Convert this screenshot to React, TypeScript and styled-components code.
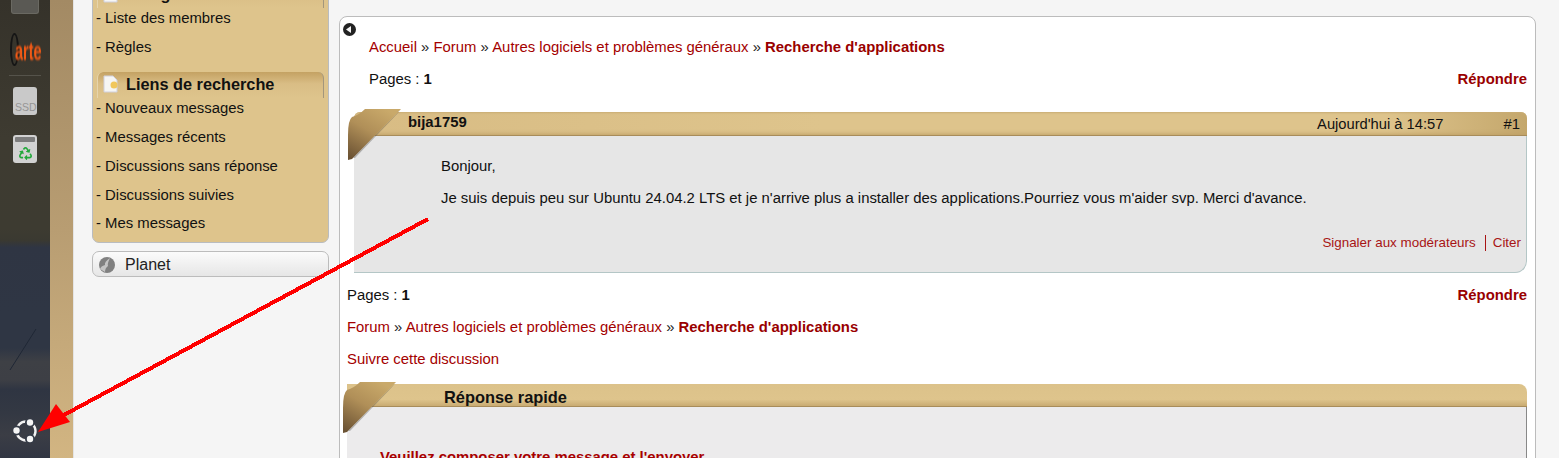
import React from "react";
import styled, { createGlobalStyle } from "styled-components";
import { FaRecycle } from "react-icons/fa";

const Global = createGlobalStyle`
  html, body { margin: 0; padding: 0; background: #f5f5f5; }
  body { font-family: "Liberation Sans", Arial, sans-serif; font-size: 14.88px; color: #111; }
`;

const Page = styled.div`
  position: relative;
  display: flex;
  width: 1559px;
  height: 458px;
  overflow: hidden;
`;

const Dock = styled.aside`
  width: 50px;
  flex: none;
  display: flex;
  flex-direction: column;
  align-items: center;
  background: linear-gradient(
    180deg,
    #35322a 0,
    #3e3b31 30%,
    #3d3b31 50%,
    #3a3931 52.5%,
    #2f3543 54%,
    #2f3644 68%,
    #2f3644 76%,
    #3e4045 79%,
    #3d3f45 83%,
    #2f3542 85%,
    #333843 90%,
    #3b3d45 95%,
    #313643 100%
  );
`;

const TopTile = styled.div`
  width: 28px;
  height: 14px;
  flex: none;
  box-sizing: border-box;
  border-radius: 0 0 3px 3px;
  background: #5a5954;
  border: 1px solid #6a6962;
  border-top: 0;
`;

const ArteLogo = styled.div`
  position: relative;
  width: 33px;
  height: 34px;
  margin: 19px 0 0 2px;
  flex: none;
  display: flex;
  align-items: center;
  justify-content: flex-end;
`;

const ArteRing = styled.span`
  position: absolute;
  left: 0;
  top: 0;
  width: 5px;
  height: 29px;
  border: 2px solid #151515;
  border-radius: 50%;
`;

const ArteWord = styled.span`
  font-size: 26px;
  font-weight: 700;
  color: #f25a16;
  transform: scaleX(0.56);
  transform-origin: right center;
  filter: blur(0.8px);
  line-height: 34px;
  margin-top: 2px;
  margin-right: 1px;
`;

const DockRule = styled.div`
  width: 32px;
  height: 1px;
  margin-top: 8px;
  flex: none;
  background: #55534b;
`;

const SsdTile = styled.div`
  width: 24px;
  height: 28px;
  margin-top: 11px;
  flex: none;
  border-radius: 3px;
  background: #c9c9c9;
  color: #959595;
  font-size: 10.5px;
  line-height: 13px;
  display: flex;
  align-items: flex-end;
  justify-content: flex-start;
  padding: 0 0 1px 2px;
  box-sizing: border-box;
  white-space: nowrap;
`;

const TrashTile = styled.div`
  width: 24px;
  height: 28px;
  margin-top: 20px;
  flex: none;
  border-radius: 3px;
  background: #d2d2d2;
  display: flex;
  flex-direction: column;
  align-items: center;
`;

const TrashLid = styled.div`
  width: 20px;
  height: 5px;
  margin-top: 2px;
  margin-bottom: 5px;
  background: #7d7d7d;
  border-radius: 1px;
`;

const UbuntuMark = styled.svg`
  margin-top: auto;
  margin-bottom: 15px;
  flex: none;
`;

const Strip = styled.div`
  width: 24px;
  flex: none;
  background: linear-gradient(180deg, #a38a64 0%, #b89d72 50%, #d2b582 100%);
  border-right: 1px solid #e4e4e4;
  box-sizing: border-box;
`;

const Main = styled.main`
  flex: 1;
  display: flex;
  align-items: flex-start;
  padding-left: 18px;
  background: #f5f5f5;
  min-width: 0;
`;

const Sidebar = styled.nav`
  width: 237px;
  flex: none;
  margin-top: -25px;
  display: flex;
  flex-direction: column;
  gap: 8px;
`;

const MenuBox = styled.section`
  background: #dec48c;
  border: 1px solid #b9bcc0;
  border-radius: 7px;
  padding: 6px 4px 9px 3px;
  box-sizing: border-box;
`;

const MenuHead = styled.h3<{ $spaced?: boolean }>`
  margin: ${(p) => (p.$spaced ? "15px" : "0")} 0 0 1px;
  height: 26px;
  box-sizing: border-box;
  display: flex;
  align-items: center;
  gap: 7px;
  padding: 0 0 2px 4px;
  font-size: 16.3px;
  font-weight: 700;
  line-height: 24px;
  color: #111;
  border-radius: 6px 6px 0 0;
  border-right: 1px solid #a3967c;
  border-left: 1px solid #e6d4ac;
  background: linear-gradient(180deg, #c4a263 0, #d9bd85 45%, #dec48c 100%);
`;

const MenuList = styled.ul`
  list-style: none;
  margin: 0;
  padding: 0;
  display: flex;
  flex-direction: column;
  gap: 8.9px;
`;

const MenuItem = styled.li`
  height: 20px;
  line-height: 20px;
  font-size: 14.88px;
  color: #111;
  white-space: nowrap;
`;

const PlanetBox = styled.div`
  height: 22px;
  display: flex;
  align-items: center;
  gap: 10px;
  padding: 2px 0 0 6px;
  border: 1px solid #bcbcbc;
  border-radius: 7px;
  background: linear-gradient(180deg, #fbfbfb, #e6e6e6);
  font-size: 16px;
  color: #222;
`;

const ContentBox = styled.article`
  width: 1197px;
  flex: none;
  margin: 16px 0 0 10px;
  background: #fff;
  border: 1px solid #bcbcbc;
  border-radius: 8px;
  box-sizing: border-box;
  padding: 6px 8px 0 3px;
  height: 600px;
`;

const BackIcon = styled.svg`
  display: block;
`;

const Crumbs = styled.div<{ $indent: number; $top: number }>`
  margin: ${(p) => p.$top}px 0 0 ${(p) => p.$indent}px;
  height: 20px;
  line-height: 20px;
  font-size: 14.88px;
  color: #222;
  white-space: nowrap;
`;

const Link = styled.a`
  color: #a40000;
`;

const Current = styled.strong`
  color: #990000;
`;

const PagerRow = styled.div<{ $indent: number; $top: number }>`
  margin: ${(p) => p.$top}px 0 0 ${(p) => p.$indent}px;
  height: 20px;
  line-height: 20px;
  display: flex;
  justify-content: space-between;
  font-size: 14.88px;
  color: #111;
`;

const Post = styled.section`
  position: relative;
  margin: 23px 0 0 11px;
`;

const PostHead = styled.header`
  height: 24px;
  box-sizing: border-box;
  display: flex;
  align-items: flex-start;
  border-radius: 6px 6px 0 0;
  border-bottom: 1px solid #a88c5a;
  background: linear-gradient(90deg, #d8bc84 0, #dec48c 40%, #dec48c 88%, #c4a76c 100%);
  box-shadow: inset 0 -4px 4px -3px #bfa067, inset 0 2px 2px -1px #c9ad74;
  padding-left: 54px;
`;

const Author = styled.strong`
  font-size: 14.88px;
  line-height: 20px;
`;

const PostDate = styled.span`
  margin-left: auto;
  font-size: 14.72px;
  line-height: 25px;
`;

const PostNum = styled.span`
  margin-left: 60px;
  margin-right: 7px;
  font-size: 14.88px;
  line-height: 25px;
`;

const PostBody = styled.div`
  height: 137px;
  box-sizing: border-box;
  background: #e6e6e6;
  border-right: 1px solid #b4c6c6;
  border-bottom: 1px solid #b4c6c6;
  border-radius: 0 0 12px 0;
  padding: 20px 5px 0 87px;
  display: flex;
  flex-direction: column;
`;

const Para = styled.p`
  margin: 0 0 12px;
  font-size: 14.88px;
  line-height: 20px;
  color: #111;
`;

const PostActions = styled.div`
  margin-top: auto;
  margin-bottom: 21px;
  display: flex;
  justify-content: flex-end;
  align-items: center;
  font-size: 13.4px;
  line-height: 16px;
`;

const ActionLink = styled.a<{ $divided?: boolean }>`
  color: #a81414;
  ${(p) => p.$divided && "border-left: 1px solid #a81414; margin-left: 9px; padding-left: 7px;"}
`;

const Corner = styled.svg<{ $left: number; $top: number }>`
  position: absolute;
  left: ${(p) => p.$left}px;
  top: ${(p) => p.$top}px;
`;

const Reply = styled.section`
  position: relative;
  margin: 15px 0 0 4px;
`;

const ReplyHead = styled.header`
  height: 23px;
  box-sizing: border-box;
  border-radius: 0 8px 0 0;
  border-bottom: 1px solid #a88c5a;
  background: linear-gradient(180deg, #dcc28a 0, #dec48c 70%, #c9ab72 100%);
  padding-left: 97px;
  font-size: 16.4px;
  font-weight: 700;
  line-height: 26px;
  color: #111;
  white-space: nowrap;
`;

const ReplyBody = styled.div`
  background: #ecebec;
  border-right: 1px solid #888;
  height: 100px;
  padding: 40px 0 0 33px;
  box-sizing: border-box;
`;

const ReplyPrompt = styled.strong`
  color: #a80000;
  font-size: 14.88px;
  line-height: 20px;
`;

const Arrow = styled.svg`
  position: absolute;
  left: 0;
  top: 0;
  pointer-events: none;
`;

const CornerShape = ({ id, left, top }: { id: string; left: number; top: number }) => (
  <Corner $left={left} $top={top} width="58" height="58" viewBox="0 0 58 58">
    <defs>
      <linearGradient id={id} x1="0.7" y1="0" x2="0.1" y2="1">
        <stop offset="0" stopColor="#c9a96a" />
        <stop offset="0.45" stopColor="#b08f58" />
        <stop offset="1" stopColor="#6b5233" />
      </linearGradient>
    </defs>
    <path d="M6 50 L54 1 L50 6 L8 50 Z" fill="#444" opacity="0.35" />
    <path d="M18 1 L54 1 L5 51 L1 52 L1 27 Q1 12 5 9 Q12 7 18 1 Z" fill={`url(#${id})`} />
  </Corner>
);

const SearchIcon = () => (
  <svg width="17" height="18" viewBox="0 0 17 18">
    <path d="M2 1 H11 L15 5 V17 H2 Z" fill="#f6f6f4" stroke="#d0d0dc" />
    <circle cx="12" cy="10" r="3.5" fill="#f1c75b" />
  </svg>
);

const PlanetIcon = () => (
  <svg width="16" height="16" viewBox="0 0 16 16">
    <circle cx="8" cy="8" r="8" fill="#808080" />
    <path d="M1 12 Q2 9 6 8 Q5 5 11 1 Q8 7 9 9 Q6 11 6 15 Z" fill="#c4c4c4" />
  </svg>
);

export default function App() {
  return (
    <Page>
      <Global />
      <Dock>
        <TopTile />
        <ArteLogo>
          <ArteRing />
          <ArteWord>arte</ArteWord>
        </ArteLogo>
        <DockRule />
        <SsdTile>SSD</SsdTile>
        <TrashTile>
          <TrashLid />
          <FaRecycle size={13} color="#22a83a" />
        </TrashTile>
        <UbuntuMark width="24" height="24" viewBox="0 0 24 24">
          <circle cx="13" cy="12" r="9.5" fill="none" stroke="#f2f2f2" strokeWidth="2.4" />
          <circle cx="17" cy="3.5" r="5" fill="#353b47" />
          <circle cx="3.5" cy="11.5" r="5" fill="#353b47" />
          <circle cx="17" cy="20" r="5" fill="#353b47" />
          <circle cx="17" cy="3.5" r="3.2" fill="#f5f5f5" />
          <circle cx="3.5" cy="11.5" r="3.2" fill="#f5f5f5" />
          <circle cx="17" cy="20" r="3.2" fill="#f5f5f5" />
        </UbuntuMark>
      </Dock>
      <Strip />
      <Main>
        <Sidebar>
          <MenuBox>
            <MenuHead>
              <SearchIcon />
              Navigation
            </MenuHead>
            <MenuList>
              <MenuItem>- Liste des membres</MenuItem>
              <MenuItem>- Règles</MenuItem>
            </MenuList>
            <MenuHead $spaced>
              <SearchIcon />
              Liens de recherche
            </MenuHead>
            <MenuList>
              <MenuItem>- Nouveaux messages</MenuItem>
              <MenuItem>- Messages récents</MenuItem>
              <MenuItem>- Discussions sans réponse</MenuItem>
              <MenuItem>- Discussions suivies</MenuItem>
              <MenuItem>- Mes messages</MenuItem>
            </MenuList>
          </MenuBox>
          <PlanetBox>
            <PlanetIcon />
            Planet
          </PlanetBox>
        </Sidebar>
        <ContentBox>
          <BackIcon width="13" height="13" viewBox="0 0 13 13">
            <circle cx="6.5" cy="6.5" r="6.5" fill="#222" />
            <path d="M3 6.5 L8 3 V10 Z" fill="#f4f4f4" />
          </BackIcon>
          <Crumbs $indent={26} $top={1}>
            <Link>Accueil</Link> » <Link>Forum</Link> » <Link>Autres logiciels et problèmes généraux</Link> » <Current>Recherche d'applications</Current>
          </Crumbs>
          <PagerRow $indent={26} $top={12}>
            <span>Pages : <strong>1</strong></span>
            <Current>Répondre</Current>
          </PagerRow>
          <Post>
            <CornerShape id="cornerA" left={-7} top={-4} />
            <PostHead>
              <Author>bija1759</Author>
              <PostDate>Aujourd'hui à 14:57</PostDate>
              <PostNum>#1</PostNum>
            </PostHead>
            <PostBody>
              <Para>Bonjour,</Para>
              <Para>Je suis depuis peu sur Ubuntu 24.04.2 LTS et je n'arrive plus a installer des applications.Pourriez vous m'aider svp. Merci d'avance.</Para>
              <PostActions>
                <ActionLink>Signaler aux modérateurs</ActionLink>
                <ActionLink $divided>Citer</ActionLink>
              </PostActions>
            </PostBody>
          </Post>
          <PagerRow $indent={4} $top={12}>
            <span>Pages : <strong>1</strong></span>
            <Current>Répondre</Current>
          </PagerRow>
          <Crumbs $indent={4} $top={12}>
            <Link>Forum</Link> » <Link>Autres logiciels et problèmes généraux</Link> » <Current>Recherche d'applications</Current>
          </Crumbs>
          <Crumbs $indent={4} $top={12}>
            <Link>Suivre cette discussion</Link>
          </Crumbs>
          <Reply>
            <CornerShape id="cornerB" left={-5} top={-3} />
            <ReplyHead>Réponse rapide</ReplyHead>
            <ReplyBody>
              <ReplyPrompt>Veuillez composer votre message et l'envoyer</ReplyPrompt>
            </ReplyBody>
          </Reply>
        </ContentBox>
      </Main>
      <Arrow width="1559" height="458" viewBox="0 0 1559 458">
        <line x1="36" y1="329" x2="10" y2="370" stroke="#1f2735" strokeWidth="1" />
        <line x1="428" y1="219" x2="62" y2="416" stroke="#f00" strokeWidth="4" shapeRendering="crispEdges" />
        <path d="M38 432 L56 404 L70 422 Z" fill="#f00" />
      </Arrow>
    </Page>
  );
}
